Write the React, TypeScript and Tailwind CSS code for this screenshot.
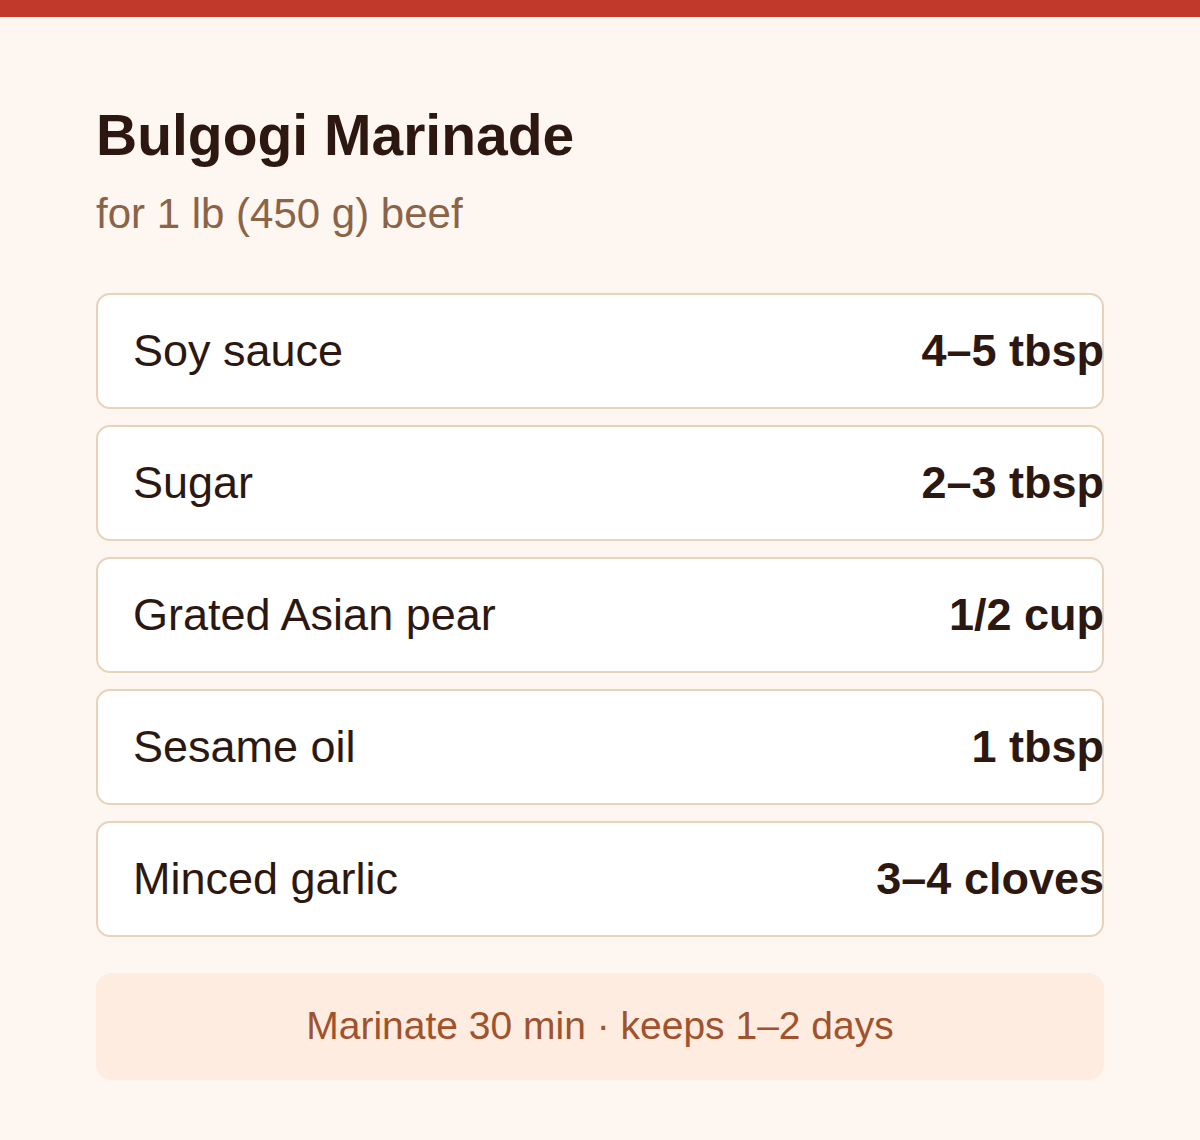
import React from "react";

const rows: [string, string][] = [
  ["Soy sauce", "4–5 tbsp"],
  ["Sugar", "2–3 tbsp"],
  ["Grated Asian pear", "1/2 cup"],
  ["Sesame oil", "1 tbsp"],
  ["Minced garlic", "3–4 cloves"],
];

export default function App() {
  return (
    <div
      className="min-h-[1140px] w-[1200px] bg-[#fef6f0]"
      style={{ fontFamily: '"Liberation Sans", Arial, sans-serif' }}
    >
      <div className="h-[17px] bg-[#c0392b]" />
      <div className="px-[96px] pt-[84px]">
        <h1 className="text-[57px] font-bold leading-[1.2] text-[#2c1810]">Bulgogi Marinade</h1>
        <p className="mt-[20px] text-[42px] leading-[1.2] text-[#8b6347]">for 1 lb (450 g) beef</p>
        <div className="mt-[53px] flex flex-col gap-[16px]">
          {rows.map(([name, amt]) => (
            <div
              key={name}
              className="flex h-[116px] items-center justify-between rounded-[14px] border-[2.5px] border-[#e7d3ba] bg-white pl-[35px] pr-0"
            >
              <span className="text-[45px] text-[#2c1810]">{name}</span>
              <span className="mr-[-2px] text-[45px] font-bold text-[#2c1810]">{amt}</span>
            </div>
          ))}
        </div>
        <div className="mt-[36px] flex h-[107px] items-center justify-center rounded-[16px] bg-[#fdecdf]">
          <span className="text-[39px] text-[#a0522d]">Marinate 30 min · keeps 1–2 days</span>
        </div>
      </div>
    </div>
  );
}
